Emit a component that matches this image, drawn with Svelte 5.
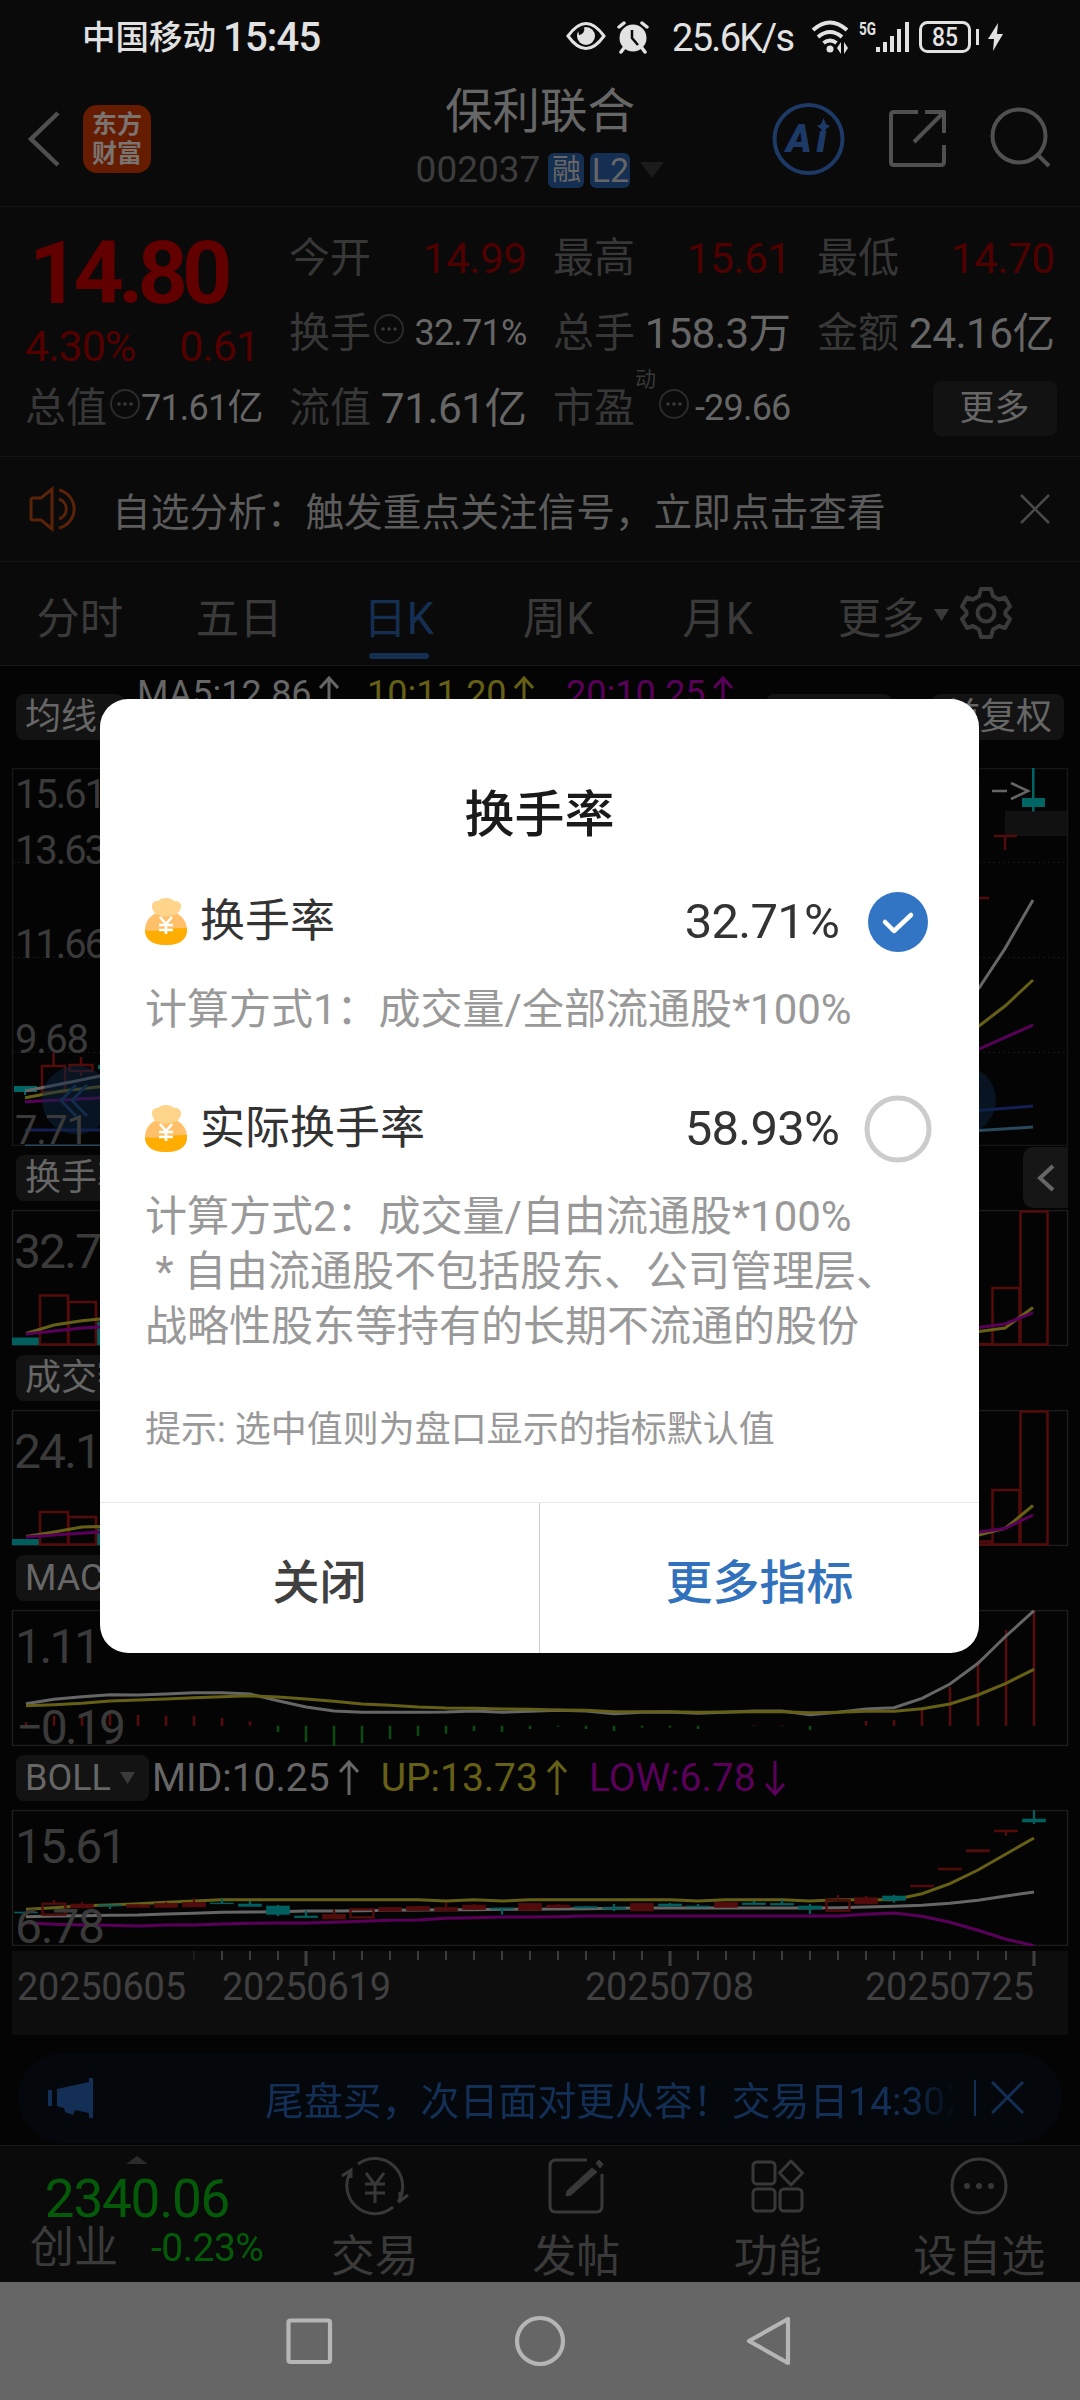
<script>
  const quotes = [
    { label: "今开", value: "14.99", tone: "red" },
    { label: "最高", value: "15.61", tone: "red" },
    { label: "最低", value: "14.70", tone: "red" },
    { label: "换手", value: "32.71%", more: true, small: true },
    { label: "总手", value: "158.3万" },
    { label: "金额", value: "24.16亿" },
    { label: "总值", value: "71.61亿", more: true, small: true },
    { label: "流值", value: "71.61亿" },
    { label: "市盈", value: "-29.66", more: true, small: true, sup: "动" },
  ];
  const tabs = ["分时", "五日", "日K", "周K", "月K", "更多"];

  // one sample every 28px, 37 trading days
  const X0 = 26;
  const STEP = 28;
  const x = (i) => X0 + i * STEP;
  const line = (ys) => ys.map((y, i) => `${x(i)},${y}`).join(" ");
  const rep = (v, n) => Array(n).fill(v);

  const dif = [
    93.7, 89.3, 86.7, 84.7, 85, 84, 82.7, 82.7, 84, 90.7, 97, 101, 102.3, 102.3, 102.3, 102, 101,
    102.3, 101.3, 100.3, 101, 103.7, 102.3, 102, 103.3, 102.3, 101, 101, 104.7, 102.3, 99, 97.7,
    88.3, 74, 53.3, 26, 0.7,
  ];
  const dea = [
    95.7, 94.7, 93.3, 91, 90, 89, 87.7, 86.7, 85.7, 87, 89, 91.3, 94, 95.3, 97, 98, 98.3, 99, 99.3,
    100, 100.3, 101.7, 101.7, 101.7, 102.3, 102, 101.7, 101.7, 102.7, 102.3, 101.3, 101.3, 98.7, 94,
    85, 73.3, 59.3,
  ];
  const macdZero = 115.7;
  const macd = [
    112, 105.7, 107, 104, 105, 105.7, 105.7, 108, 111.3, 122, 132, 136, 133, 129, 126, 123.7, 121,
    122, 119, 116.7, 119, 121, 117.7, 117.7, 119, null, 115, 115, 120, null, 111, 110, 98.3, 77,
    50.7, 20, 0,
  ];
  const up = [
    99.3, 97.7, 95.7, 95, 93.7, 92.3, 91, ...rep(89.7, 8), 91, 89.7, 91, ...rep(89.7, 6), 91,
    ...rep(89.7, 3), 91, ...rep(89.7, 3), 83.7, 73.7, 60, 44, 28,
  ];
  const mid = [
    106.7, 106, 105.7, 105.3, 105, 104, 103.3, 102.3, 102, 101.7, 101, 101, 100.7, 100.3, 100, 99.7,
    99.7, 99.3, 99.3, 99, 98.7, 98.3, ...rep(98, 7), 97.7, 97, 96.3, 95.3, 93.3, 90.3, 86, 82,
  ];
  const low = [
    112.7, 114.3, 115, 115.3, 116, 115, 115, 114, 113.3, 113, 113, 112.3, 111.3, 110.3, 110, 108.3,
    107.7, 107, 107, 106.7, ...rep(106, 10), 104.3, 103, 106.3, 112.3, 120.3, 129.3, 135.7,
  ];

  // [top, bottom, high, low, kind]: c = falling, r = rising, h = rising hollow
  const candles = [
    [102, 103, 102, 103, "c"], [93.7, 104.7, 90, 105, "h"], [94, 98, 92, 98, "r"],
    [95, 96, 95, 99, "c"], [94.7, 97.3, 94, 97, "r"], [93.3, 97.3, 92, 98, "r"],
    [92.3, 97, 88.3, 97, "r"], [93, 93.8, 89, 94, "c"], [94, 96.3, 91, 96, "c"],
    [96, 104.3, 95, 106, "c"], [106, 107.7, 100.7, 108, "c"], [104.3, 109, 99.3, 109, "r"],
    [99.3, 107.3, 99, 107, "h"], [97.3, 101.3, 97, 101, "r"], [96.3, 100.7, 96, 101, "r"],
    [97.3, 101, 92.7, 101, "r"], [95, 99.7, 94, 100, "r"], [98, 99, 98, 104.7, "c"],
    [93.3, 100.3, 93, 100, "r"], [95, 97.7, 94, 98, "r"], [96.7, 98, 96, 98, "c"],
    [97.7, 99, 94, 101, "c"], [93.3, 101, 93, 101, "r"], [94, 96, 93, 97, "c"],
    [96, 97, 94, 97, "c"], [92.3, 97.3, 92, 97, "r"], [93, 94.7, 91, 95, "c"],
    [93.3, 95, 90, 95, "c"], [96, 99, 94, 104, "c"], [90, 100.7, 85, 101, "h"],
    [87.7, 94, 86, 94, "r"], [86, 90.3, 85, 92.7, "c"], [75, 77, 75, 77, "r"],
    [58, 60, 58, 60, "r"], [39.7, 42, 39.7, 42, "r"], [20, 22, 20, 26, "r"],
    [9, 12, 0, 14, "c"],
  ];

  const axis = [
    { date: "20250605", at: 17 },
    { date: "20250619", at: 222 },
    { date: "20250708", at: 585 },
    { date: "20250725", at: 865 },
  ];

  const options = [
    { name: "换手率", value: "32.71%", desc: ["计算方式1：成交量/全部流通股*100%"] },
    {
      name: "实际换手率",
      value: "58.93%",
      desc: [
        "计算方式2：成交量/自由流通股*100%",
        " * 自由流通股不包括股东、公司管理层、",
        "战略性股东等持有的长期不流通的股份",
      ],
    },
  ];
  let selected = 0;
  let tab = 2;
</script>

{#snippet arrow(down)}
  <svg class="arrow" class:down width="20" height="36" viewBox="0 0 20 36">
    <path d="M10 35V2M1 12L10 2l9 10" fill="none" stroke="currentColor" stroke-width="3" />
  </svg>
{/snippet}

{#snippet more()}
  <svg class="more" width="32" height="32" viewBox="0 0 32 32">
    <circle cx="16" cy="16" r="14" fill="none" stroke="#2b2b2b" stroke-width="2" />
    <g fill="#3a3a3a"><circle cx="10" cy="16" r="1.8" /><circle cx="16" cy="16" r="1.8" /><circle cx="22" cy="16" r="1.8" /></g>
  </svg>
{/snippet}

{#snippet cell(q)}
  <div class="cell">
    <span class="label">{q.label}</span>
    {#if q.sup}<sup>{q.sup}</sup>{/if}
    {#if q.more}{@render more()}{/if}
    <span class="value {q.tone ?? ''}" class:small={q.small}>{q.value}</span>
  </div>
{/snippet}

{#snippet volume(max, c0, r1, r2, c3, r34, r35, yellow, purple)}
  <svg class="panel" width="1080" height="136" viewBox="0 0 1080 136">
    <rect x="12.5" y="0.5" width="1055" height="135" fill="none" stroke="#1c1c1c" stroke-width="1.5" />
    <text x="14" y="58" textLength="113" class="big">{max}</text>
    <g fill="#005e5e">
      <rect x="12" y={c0} width="27" height={135 - c0} />
      <rect x="97" y={c3} width="27" height={135 - c3} />
    </g>
    <g fill="none" stroke="#520c0c" stroke-width="2.6">
      <rect x="40" y={r1} width="28" height={134.5 - r1} />
      <rect x="68.500" y={r2} width="27.500" height={134.500 - r2} />
      <rect x="964" y={r34} width="28" height={134.5 - r34} />
      <rect x="992.500" y={r35} width="27" height={134.500 - r35} />
      <rect x="1020.500" y="1.500" width="27" height="133" />
    </g>
    <polyline class="ln y" points={yellow} />
    <polyline class="ln p" points={purple} />
  </svg>
{/snippet}

<main>
  <div class="status">
    <span class="carrier">中国移动</span><span class="clock">15:45</span>
    <svg class="eye" width="40" height="30" viewBox="0 0 40 30">
      <path d="M2 15Q20-10 38 15Q20 40 2 15z" fill="none" stroke="#e2e2e2" stroke-width="3" />
      <circle cx="20" cy="15" r="9" fill="#e2e2e2" /><path d="M18 6a6 6 0 0 1-5 8l-1-5z" fill="#0a0a0a" />
    </svg>
    <svg class="alarm" width="34" height="34" viewBox="0 0 34 34">
      <g fill="none" stroke="#e2e2e2" stroke-width="3.500" stroke-linecap="round">
        <path d="M3 7l5-4M31 7l-5-4M8 28l-3 4M26 28l3 4" />
      </g>
      <circle cx="17" cy="18" r="13.500" fill="#e2e2e2" />
      <path d="M16 10v8l6 7" fill="none" stroke="#0a0a0a" stroke-width="2.500" />
    </svg>
    <span class="speed">25.6K/s</span>
    <svg class="radio" width="196" height="36" viewBox="0 0 196 36">
      <g fill="none" stroke="#e2e2e2" stroke-width="4">
        <path d="M2 11q17-15 34 0M7 18q12-10 24 0M12.500 24q6.500-5 13 0" />
        <rect x="109.500" y="3.500" width="49" height="29" rx="7" stroke-width="3" />
      </g>
      <g fill="#e2e2e2">
        <circle cx="19" cy="30" r="3.500" />
        <path d="M26 29l4-6v12zM37 29l-4-6v12z" />
        <path d="M65 28h4v5h-4zM72 23h4v10h-4zM79 17h4v16h-4zM86 10h4v23h-4zM94 3h4v30h-4z" />
        <path d="M165 10h3v16h-3zM187 4l-10 16h6l-1 12 10-17h-6z" />
        <text x="48" y="16" font-size="18" font-weight="700" textLength="17" lengthAdjust="spacingAndGlyphs">5G</text>
        <text x="121" y="27" font-size="26" font-weight="500" textLength="26" lengthAdjust="spacingAndGlyphs">85</text>
      </g>
    </svg>
  </div>

  <header>
    <svg class="back" width="36" height="60" viewBox="0 0 36 60">
      <path d="M32 4L5 30l27 26" fill="none" stroke="#4f4f4f" stroke-width="4.500" />
    </svg>
    <div class="logo"><span>东方</span><span>财富</span></div>
    <div class="stock">
      <h1>保利联合</h1>
      <div class="code">
        002037<i>融</i><i class="l2">L2</i>
        <svg width="24" height="16" viewBox="0 0 24 16"><path d="M0 0h24L12 16z" fill="#1b1b1b" /></svg>
      </div>
    </div>
    <svg class="tools" width="290" height="80" viewBox="0 0 290 80">
      <circle cx="43.500" cy="40" r="34" fill="none" stroke="#1d3966" stroke-width="4" />
      <text x="21" y="53" font-size="39" font-weight="900" font-style="italic" fill="#1d3966" textLength="41">Aı</text>
      <path d="M58.500 19l2.500 6 4 2-4 3-2.500 6-2.500-6-4-3 4-2z" fill="#1d3966" />
      <g fill="none" stroke="#505050" stroke-width="4" stroke-linejoin="round">
        <path d="M153 13h-24q-3 0-3 3v47q0 3 3 3h47q3 0 3-3V46M160 13h19v21M179 13l-30 30" />
        <circle cx="254" cy="37" r="26.500" />
        <path d="M273 56l11 11" />
      </g>
    </svg>
  </header>

  <section class="quotes">
    <div class="price">
      <strong>14.80</strong>
      <div><span>4.30%</span><span>0.61</span></div>
    </div>
    {#each quotes as q}
      {@render cell(q)}
    {/each}
    <button class="expand">更多</button>
  </section>

  <section class="notice">
    <svg width="52" height="46" viewBox="0 0 52 46" fill="none" stroke="#5a2208" stroke-width="3">
      <path d="M2 14q0-2 2-2h8L23 3v40L12 34H4q-2 0-2-2zM30 4a19.500 19.500 0 0 1 0 38M30 13a10.500 10.500 0 0 1 0 20" />
    </svg>
    <p>自选分析：触发重点关注信号，立即点击查看</p>
    <svg width="30" height="30" viewBox="0 0 30 30"><path d="M1 1l28 28M29 1L1 29" stroke="#4a4a4a" stroke-width="2.500" /></svg>
  </section>

  <nav class="tabs">
    {#each tabs as name, i}
      <button class:active={tab === i} on:click={() => (tab = i)}>
        {name}{#if i === 5}<svg class="tri" width="15" height="12" viewBox="0 0 15 12"><path d="M0 0h15L7.500 12z" fill="#3a3a3a" /></svg>{/if}
      </button>
    {/each}
    <svg class="gear" width="54" height="54" viewBox="0 0 54 54" fill="none" stroke="#3a3a3a" stroke-width="4" stroke-linejoin="round">
      <path d="M22 3h10l2 7 6 3.500 6-2 5 9-4.500 5v3L51 33l-5 9-6-2-6 3.500-2 7.500H22l-2-7.500-6-3.500-6 2-5-9 4.500-4.500v-3L3 20.500l5-9 6 2 6-3.500z" />
      <circle cx="27" cy="27" r="8.500" />
    </svg>
  </nav>

  <section class="charts">
    <div class="ma">
      <span class="tag avg">均线<svg class="tri" width="15" height="12" viewBox="0 0 15 12"><path d="M0 0h15L7.500 12z" fill="#3a3a3a" /></svg></span>
      <div class="values">
        <span class="w">MA5:12.86{@render arrow(false)}</span>
        <span class="y">10:11.20{@render arrow(false)}</span>
        <span class="p">20:10.25{@render arrow(false)}</span>
      </div>
      <span class="tag blank"></span>
      <span class="tag adjust">前复权</span>
    </div>

    <svg class="panel" width="1080" height="378" viewBox="0 0 1080 378">
      <rect x="12.500" y="0.500" width="1055" height="377" fill="none" stroke="#161616" stroke-width="1.500" />
      <path d="M13 94.500h1054M13 189.500h1054M13 284.500h1054" stroke="#171717" stroke-dasharray="2 3" />
      <rect x="1005" y="43" width="62" height="25" fill="#111" />
      <g fill="none" stroke="#520c0c" stroke-width="2.600">
        <path d="M53.500 285v13M81 289v8M81 303v5M994 68h23M1005 68v14M965 130h24" />
        <rect x="42" y="298" width="23" height="26" />
        <rect x="69.500" y="297" width="23" height="6" />
      </g>
      <path d="M14 318h23v6H14zM24 324h2v3h-2zM98 297h23v4H98zM1022 30h23v9h-23zM1032 0h2.500v43.500h-2.500z" fill="#006565" />
      <polyline class="ln b" points="25,362 100,362 979,342.500 1033,338" />
      <polyline class="ln lb" points="25,378 100,378 979,362.600 1033,359" />
      <polyline class="ln p" points="25,333.700 100,330 979,281 1033,257" />
      <polyline class="ln y" points="25,329.700 62,323 100,318.700 979,258 1005,238 1033,212" />
      <polyline class="ln w" points="25,323 52,317.700 76,313 100,308 979,220 1005,180.600 1033,132" />
      <circle cx="76.500" cy="332" r="34.500" fill="#0c2440" fill-opacity="0.500" />
      <circle cx="961.500" cy="332" r="34.500" fill="#0c2440" fill-opacity="0.500" />
      <path d="M76 317l-15 15.500L76 348M87 317l-15 15.500L87 348" fill="none" stroke="#132c4b" stroke-width="3" />
      <g class="mid">
        <text x="15" y="39.700" textLength="92">15.61</text>
        <text x="15" y="96" textLength="92">13.63</text>
        <text x="15" y="190" textLength="92">11.66</text>
        <text x="15" y="285" textLength="74">9.68</text>
        <text x="15" y="376" textLength="74">7.71</text>
      </g>
      <text x="987" y="37" text-anchor="end" font-size="40" fill="#666">15.61</text>
      <path d="M992 23h15M1011 15l17 8-17 8" fill="none" stroke="#666" stroke-width="2.600" />
    </svg>

    <div class="row turnover">
      <span class="tag">换手率</span>
      <button class="fold">
        <svg width="18" height="28" viewBox="0 0 18 28"><path d="M16 2L3 14l13 12" fill="none" stroke="#666" stroke-width="4" /></svg>
      </button>
    </div>
    {@render volume("32.71", 127.5, 85.5, 92, 111.7, 134, 78, "26,123.500 54,115 82,110.700 100,109 979,121.600 1005,118 1033,97.500", "26,124 54,121 82,118 100,117 979,117.600 1005,114 1033,102.600")}

    <div class="row"><span class="tag">成交额</span></div>
    {@render volume("24.16", 129, 102, 107, 118.6, 131.5, 80, "26,126.500 54,122 82,117 100,116.500 979,125 1005,118.500 1033,95.500", "26,127 54,125 100,122 979,122 1005,118.500 1033,105")}

    <div class="row"><span class="tag">MACD</span></div>
    <svg class="panel" width="1080" height="136" viewBox="0 0 1080 136">
      <rect x="12.500" y="0.500" width="1055" height="135" fill="none" stroke="#1c1c1c" stroke-width="1.500" />
      {#each macd as v, i}
        {#if v !== null}
          <path d="M{x(i)} {macdZero}V{v}" stroke={v < macdZero ? "#560d0d" : "#0d4a11"} stroke-width="2.600" />
        {/if}
      {/each}
      <polyline class="ln w" points={line(dif)} />
      <polyline class="ln y" points={line(dea)} />
      <text x="15" y="53" textLength="86" class="big">1.11</text>
      <text x="16" y="134" textLength="110" class="big">−0.19</text>
    </svg>

    <div class="row boll">
      <span class="tag">BOLL<svg class="tri" width="15" height="12" viewBox="0 0 15 12"><path d="M0 0h15L7.500 12z" fill="#3a3a3a" /></svg></span>
      <span class="w">MID:10.25{@render arrow(false)}</span>
      <span class="y">UP:13.73{@render arrow(false)}</span>
      <span class="p">LOW:6.78{@render arrow(true)}</span>
    </div>
    <svg class="panel" width="1080" height="136" viewBox="0 0 1080 136">
      <rect x="12.500" y="0.500" width="1055" height="135" fill="none" stroke="#1c1c1c" stroke-width="1.500" />
      <polyline class="ln y" points={line(up)} />
      <polyline class="ln w" points={line(mid)} />
      <polyline class="ln p" points={line(low)} />
      {#each candles as [top, bottom, high, lowest, kind], i}
        {@const color = kind === "c" ? "#006060" : "#520c0c"}
        <path d="M{x(i)} {high}V{kind === 'h' ? top : lowest}" stroke={color} stroke-width="2.200" />
        <rect x={x(i) - 11.500} y={top} width="23" height={bottom - top} fill={kind === "h" ? "none" : color} stroke={color} stroke-width={kind === "h" ? 2.4 : 0.6} />
      {/each}
      <text x="15" y="53" textLength="112" class="big">15.61</text>
      <text x="15" y="133" textLength="90" class="big">6.78</text>
    </svg>

    <svg class="axis" width="1056" height="84" viewBox="12 0 1056 84">
      {#each Array(31) as _, n}
        {@const i = n + 6}
        {@const major = (i - 10) % 13 === 0}
        <path d="M{x(i)} 0V{major ? 15 : 9}" stroke={i < 7 ? "#1e1e1e" : "#404040"} stroke-width={major ? 3 : 1.8} />
      {/each}
      {#each axis as a}
        <text x={a.at} y="49" textLength="169">{a.date}</text>
      {/each}
    </svg>

    <div class="promo">
      <svg width="46" height="40" viewBox="0 0 46 40" fill="#142f55">
        <path d="M0 12h4v16H0zM9 11L41 4V0h4v40h-4v-5l-14-3-2 5-8-3-1-4-7-2z" />
      </svg>
      <p>尾盘买，次日面对更从容！交易日14:30准时</p>
      <i></i>
      <svg class="x" width="33" height="33" viewBox="0 0 33 33"><path d="M1 1l31 31M32 1L1 32" stroke="#142f55" stroke-width="3" /></svg>
    </div>
  </section>

  <footer>
    <div class="index">
      <svg width="22" height="8" viewBox="0 0 22 8"><path d="M11 0l11 8H0z" fill="#2b2b2b" /></svg>
      <b>2340.06</b>
      <div><span>创业</span><em>-0.23%</em></div>
    </div>
    <div class="item">
      <svg width="68" height="64" viewBox="0 0 68 64" fill="none" stroke="#383838" stroke-width="3">
        <path d="M17 10a28 28 0 0 1 40 38M52 53A28 28 0 0 1 10 17M1 22l9-6v8M67 41l-8 6v-9" />
        <path d="M25 19l9 12 9-12M34 31v18M24 30h20M24 39h20" />
      </svg>
      交易
    </div>
    <div class="item">
      <svg width="68" height="64" viewBox="0 0 68 64" fill="none" stroke="#383838" stroke-width="3">
        <path d="M45 6H14q-6 0-6 6v40q0 6 6 6h40q6 0 6-6V20" />
        <path d="M50 14l5 4-26 23-5 1 1-5zM54 9l3-3 4 4-3 4z" fill="#383838" stroke-width="1" />
      </svg>
      发帖
    </div>
    <div class="item">
      <svg width="68" height="64" viewBox="0 0 68 64" fill="none" stroke="#383838" stroke-width="3">
        <rect x="9" y="8" width="22" height="22" rx="4" /><rect x="9" y="35" width="22" height="22" rx="4" />
        <rect x="36" y="35" width="22" height="22" rx="4" /><path d="M47 7l11.500 12L47 31 35.500 19z" stroke-linejoin="round" />
      </svg>
      功能
    </div>
    <div class="item">
      <svg width="68" height="64" viewBox="0 0 68 64" fill="none" stroke="#383838" stroke-width="3">
        <circle cx="34" cy="32" r="27" />
        <g fill="#383838" stroke="none"><circle cx="22" cy="32" r="3" /><circle cx="34" cy="32" r="3" /><circle cx="46" cy="32" r="3" /></g>
      </svg>
      设自选
    </div>
  </footer>

  <div class="keys">
    <svg width="1080" height="118" viewBox="0 0 1080 118" fill="none" stroke="#b5b5b5" stroke-width="4.200" stroke-linejoin="round">
      <rect x="288.500" y="38.500" width="41.500" height="41.500" rx="2" />
      <circle cx="540" cy="59" r="23" />
      <path d="M788 37v44L749 59z" />
    </svg>
  </div>

  <div class="dialog">
    <h2>换手率</h2>
    {#each options as o, i}
      <button class="option" on:click={() => (selected = i)}>
        <svg width="44" height="48" viewBox="0 0 44 48">
          <path d="M22 13c12 0 21 8 21 19 0 9-7 15-21 15S1 41 1 32c0-11 9-19 21-19z" fill="#ffc069" />
          <path d="M1 32c11 3 22-3 42-2v2c0 9-7 15-21 15S1 41 1 32z" fill="#ffad00" />
          <path d="M9 12c-3-4 0-10 5-9 3-4 13-4 16 0 6-1 9 5 6 9-1 3-4 5-7 5-5 2-10 2-14 0-3 0-5-2-6-5z" fill="#ffd58c" />
          <path d="M16 19l6 7 6-7M22 26v10M15 27h14M15 32h14" fill="none" stroke="#fff" stroke-width="2.600" />
        </svg>
        <span>{o.name}</span>
        <b>{o.value}</b>
        {#if selected === i}
          <svg width="68" height="68" viewBox="0 0 68 68">
            <circle cx="34" cy="34" r="30" fill="#3175c4" />
            <path d="M21 34l9 9 17-16" fill="none" stroke="#fff" stroke-width="4.500" stroke-linecap="round" stroke-linejoin="round" />
          </svg>
        {:else}
          <svg width="68" height="68" viewBox="0 0 68 68">
            <circle cx="34" cy="34" r="31" fill="#fff" stroke="#ccc" stroke-width="5" />
          </svg>
        {/if}
      </button>
      <div class="desc">
        {#each o.desc as d}<p>{d}</p>{/each}
      </div>
    {/each}
    <p class="hint">提示: 选中值则为盘口显示的指标默认值</p>
    <div class="actions">
      <button>关闭</button>
      <button class="primary">更多指标</button>
    </div>
  </div>
</main>

<style>
  :global(body) {
    margin: 0;
    background: #040404;
  }

  main {
    position: relative;
    display: flex;
    flex-direction: column;
    width: 1080px;
    height: 2400px;
    overflow: hidden;
    background: #0a0a0a;
    font-family: Roboto, "Noto Sans CJK SC", sans-serif;
    white-space: nowrap;
  }

  svg {
    display: block;
    flex: none;
  }

  p,
  h1,
  h2 {
    margin: 0;
  }

  button {
    padding: 0;
    border: 0;
    background: none;
    font: inherit;
    color: inherit;
  }

  .status {
    display: flex;
    align-items: center;
    height: 76px;
    padding-left: 82px;
    color: #e2e2e2;
    line-height: 76px;
  }

  .carrier {
    width: 141px;
    font-size: 33.5px;
    font-weight: 500;
  }

  .clock {
    width: 343px;
    font-size: 40px;
    font-weight: 500;
    letter-spacing: -0.8px;
  }

  .eye {
    margin-top: -4px;
  }

  .alarm {
    margin: -2px 0 0 10px;
  }

  .speed {
    width: 139px;
    margin-left: 22px;
    font-size: 38px;
    letter-spacing: -1.7px;
  }

  .radio {
    margin: -3px 0 0 0;
  }

  header {
    display: flex;
    align-items: center;
    box-sizing: border-box;
    height: 131px;
    padding: 0 22px 3px 26px;
    border-bottom: 1px solid #141414;
  }

  .logo {
    display: flex;
    flex-direction: column;
    justify-content: center;
    width: 68px;
    height: 68px;
    margin-left: 21px;
    border-radius: 14px;
    background: #651c00;
    color: #7a7370;
    font-size: 25px;
    font-weight: 700;
    line-height: 29px;
    text-align: center;
  }

  .stock {
    width: 400px;
    margin: 2px 0 0 189px;
    text-align: center;
  }

  h1 {
    color: #666;
    font-size: 47.5px;
    font-weight: 400;
    line-height: 60px;
  }

  .code {
    display: flex;
    align-items: center;
    justify-content: center;
    height: 56px;
    margin-top: 0;
    color: #3c3c3c;
    font-size: 37px;
    line-height: 56px;
  }

  .code i {
    width: 36px;
    height: 35px;
    margin-left: 8px;
    border-radius: 6px;
    background: #142f52;
    color: #666;
    font-size: 29px;
    font-style: normal;
    line-height: 35px;
  }

  .code .l2 {
    width: 40px;
    margin: 0 10px 0 6px;
    font-size: 34px;
  }

  .tools {
    margin-left: 25px;
  }

  .quotes {
    display: grid;
    grid-template-columns: repeat(4, 237.5px);
    grid-template-rows: repeat(3, 75px);
    column-gap: 26.5px;
    box-sizing: border-box;
    height: 250px;
    padding: 14px 0 0 25px;
    border-bottom: 1px solid #131313;
    font-size: 40px;
  }

  .price {
    grid-row: span 2;
    color: #550000;
  }

  .price strong {
    display: block;
    height: 87px;
    padding: 8px 0 0 4px;
    color: #620000;
    font-size: 88px;
    line-height: 87px;
    letter-spacing: -6px;
  }

  .price div {
    display: flex;
    justify-content: space-between;
    width: 234px;
    font-size: 43px;
    line-height: 60px;
    letter-spacing: -1px;
  }

  .cell {
    display: flex;
    align-items: center;
    line-height: 75px;
  }

  .label {
    color: #373737;
    font-size: 41px;
  }

  .more {
    margin: -8px 0 0 2px;
  }

  sup {
    margin: -58px -18px 0 0;
    color: #373737;
    font-size: 21px;
    line-height: 24px;
  }

  sup + .more {
    margin-left: 20px;
  }

  .value {
    margin-left: auto;
    color: #666;
    font-size: 42.5px;
    letter-spacing: -0.6px;
  }

  .value.small {
    font-size: 36px;
    letter-spacing: -0.8px;
  }

  .value.red {
    color: #4f0000;
  }

  .expand {
    align-self: center;
    justify-self: end;
    width: 124px;
    height: 55px;
    margin-right: -2px;
    border-radius: 8px;
    background: #121212;
    color: #666;
    font-size: 35px;
    line-height: 55px;
  }

  .notice {
    display: flex;
    align-items: center;
    box-sizing: border-box;
    height: 105px;
    padding: 0 30px 0 29px;
    border-bottom: 1px solid #141414;
    color: #5c5c5c;
    font-size: 38.7px;
  }

  .notice p {
    flex: 1;
    margin-left: 31px;
  }

  .tabs {
    display: flex;
    align-items: center;
    box-sizing: border-box;
    height: 104px;
    border-bottom: 1px solid #191919;
    color: #3a3a3a;
    font-size: 43.5px;
  }

  .tabs button {
    position: relative;
    display: flex;
    align-items: center;
    justify-content: center;
    width: 159.5px;
    height: 100px;
    padding-top: 4px;
  }

  .tabs button:last-of-type {
    padding-left: 32px;
  }

  .tabs .active {
    color: #142f52;
  }

  .tabs .active::after {
    content: "";
    position: absolute;
    bottom: 4px;
    width: 60px;
    height: 6px;
    border-radius: 3px;
    background: #142f52;
  }

  .tri {
    margin-left: 9px;
  }

  .gear {
    margin-left: 2px;
  }

  .charts {
    height: 1480px;
    border-bottom: 1px solid #1a1a1a;
    background: #040404;
  }

  .ma {
    display: flex;
    align-items: center;
    box-sizing: border-box;
    height: 102px;
    padding: 0 16px;
  }

  .tag {
    display: flex;
    align-items: center;
    box-sizing: border-box;
    height: 46px;
    padding: 0 9px;
    border-radius: 8px;
    background: #131313;
    color: #666;
    font-size: 36px;
    line-height: 46px;
  }

  .avg {
    width: 108px;
  }

  .values {
    display: flex;
    width: 642px;
    margin-top: -46px;
    font-size: 36px;
  }

  .values span {
    display: flex;
    align-items: center;
    gap: 7px;
    width: 199px;
    line-height: 40px;
  }

  .values .w {
    width: 230px;
    margin-left: 13px;
  }

  .down {
    transform: rotate(180deg);
  }

  .blank {
    width: 126px;
  }

  .adjust {
    width: 132px;
    margin-left: 40px;
    justify-content: center;
  }

  .row {
    display: flex;
    align-items: center;
    height: 64px;
    padding-left: 16px;
  }

  .turnover {
    justify-content: space-between;
    padding-right: 12px;
  }

  .fold {
    display: flex;
    align-items: center;
    justify-content: center;
    width: 45px;
    height: 61px;
    border-radius: 10px 0 0 10px;
    background: #161616;
  }

  .boll {
    font-size: 39px;
  }

  .boll > span:not(.tag) {
    display: flex;
    align-items: center;
    gap: 9px;
    margin-left: 22px;
  }

  .boll .tag {
    width: 133px;
  }

  .boll .tag + .w {
    margin-left: 3px !important;
  }

  .w {
    color: #666;
  }

  .y {
    color: #666016;
  }

  .p {
    color: #5a005a;
  }

  .ln {
    fill: none;
    stroke: currentColor;
    stroke-width: 3;
  }

  .b {
    color: #141f52;
  }

  .lb {
    color: #29485c;
  }

  .big {
    fill: #3a3a3a;
    font-size: 48px;
  }

  .mid {
    fill: #3a3a3a;
    font-size: 40px;
  }

  .axis {
    margin: 5px 0 0 12px;
    background: #0d0d0d;
    fill: #404040;
    font-size: 38px;
  }

  .promo {
    display: flex;
    align-items: center;
    box-sizing: border-box;
    width: 1044px;
    height: 90px;
    margin: 18px 0 0 18px;
    padding-left: 30px;
    border-radius: 45px;
    background: #04080d;
    color: #142f55;
    font-size: 38.9px;
  }

  .promo p {
    width: 692px;
    margin-left: 171px;
    overflow: hidden;
    -webkit-mask-image: linear-gradient(90deg, #000 93%, transparent);
    mask-image: linear-gradient(90deg, #000 93%, transparent);
  }

  .promo i {
    width: 2px;
    height: 36px;
    margin: 0 15px 0 17px;
    background: #142f55;
  }

  footer {
    display: flex;
    height: 136px;
    color: #3a3a3a;
    font-size: 44px;
  }

  .index {
    display: flex;
    flex-direction: column;
    align-items: center;
    width: 274px;
    padding-top: 10px;
  }

  .index b {
    height: 52px;
    margin-top: 9px;
    color: #055a0a;
    font-size: 53px;
    font-weight: 400;
    line-height: 52px;
    letter-spacing: -1.2px;
  }

  .index div {
    display: flex;
    align-items: center;
    width: 246px;
    margin-left: 32px;
    line-height: 46px;
  }

  .index em {
    margin-left: 33px;
    color: #055a0a;
    font-size: 39px;
    font-style: normal;
    letter-spacing: -0.5px;
  }

  .item {
    display: flex;
    flex-direction: column;
    align-items: center;
    width: 201.5px;
    padding-top: 8px;
    line-height: 78px;
  }

  .keys {
    height: 118px;
    background: #666;
  }

  .dialog {
    position: absolute;
    top: 699px;
    left: 100px;
    width: 879px;
    height: 954px;
    border-radius: 28px;
    overflow: hidden;
    background: #fff;
  }

  h2 {
    height: 60px;
    margin: 86px 0 42px;
    color: #1a1a1a;
    font-size: 50px;
    font-weight: 500;
    line-height: 60px;
    text-align: center;
  }

  .option {
    display: flex;
    align-items: center;
    width: 100%;
    height: 70px;
    padding: 0 47px 0 44px;
    color: #333;
    font-size: 45px;
    line-height: 70px;
  }

  .option span {
    flex: 1;
    margin-left: 12px;
    text-align: left;
  }

  .option b {
    margin-right: 25px;
    font-size: 49px;
    font-weight: 400;
    letter-spacing: -0.8px;
  }

  .desc {
    height: 137px;
    padding: 25px 0 0 45px;
    box-sizing: border-box;
    color: #999;
    font-size: 42px;
    line-height: 55px;
    white-space: pre;
  }

  .desc:nth-of-type(2) {
    height: 236px;
  }

  .hint {
    height: 60px;
    padding-left: 45px;
    color: #999;
    font-size: 36px;
    line-height: 60px;
  }

  .actions {
    position: absolute;
    bottom: 0;
    display: flex;
    width: 100%;
    height: 150px;
    border-top: 1px solid #e9e9e9;
  }

  .actions button {
    flex: 1;
    color: #404040;
    font-size: 47px;
    font-weight: 500;
  }

  .actions .primary {
    border-left: 1px solid #ccc;
    color: #3272bd;
  }
</style>
